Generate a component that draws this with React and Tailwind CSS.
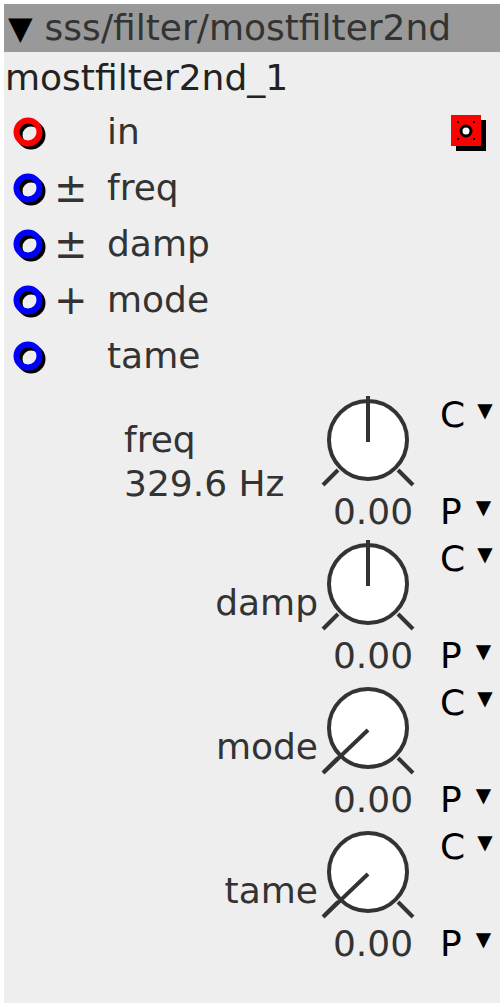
import React from "react";

const ports = [
  { name: "in", color: "#ff0000", sign: "", out: true },
  { name: "freq", color: "#0000ff", sign: "±" },
  { name: "damp", color: "#0000ff", sign: "±" },
  { name: "mode", color: "#0000ff", sign: "+" },
  { name: "tame", color: "#0000ff", sign: "" },
];

const knobs = [
  { name: "freq", display: "329.6 Hz", angle: 0 },
  { name: "damp", angle: 0 },
  { name: "mode", angle: -135 },
  { name: "tame", angle: -135 },
];

function PortIn({ color }) {
  return (
    <svg width="40" height="40" viewBox="0 0 40 40">
      <circle cx="21" cy="23" r="11.5" fill="none" stroke="#000" strokeWidth="6" />
      <circle cx="18" cy="20" r="11.5" fill="none" stroke={color} strokeWidth="6" />
    </svg>
  );
}

function PortOut() {
  return (
    <svg width="40" height="40" viewBox="0 0 40 40">
      <rect x="8" y="8" width="30" height="31" fill="#000" />
      <rect x="3" y="3" width="30" height="31" fill="#ff0000" />
      <circle cx="18" cy="19" r="5" fill="#fff" stroke="#000" strokeWidth="3" />
      <rect x="9" y="9" width="2" height="2" fill="#000" />
      <rect x="25" y="9" width="2" height="2" fill="#000" />
      <rect x="9" y="26" width="2" height="2" fill="#000" />
      <rect x="25" y="26" width="2" height="2" fill="#000" />
    </svg>
  );
}

function Knob({ angle }) {
  const rad = ((angle - 90) * Math.PI) / 180;
  const len = angle === 0 ? 44 : 62;
  const x2 = 48 + Math.cos(rad) * len;
  const y2 = 48 + Math.sin(rad) * len;
  return (
    <svg width="96" height="96" viewBox="0 0 96 96" className="overflow-visible">
      <line x1="18" y1="78" x2="3" y2="93" stroke="#333" strokeWidth="4" />
      <line x1="78" y1="78" x2="93" y2="93" stroke="#333" strokeWidth="4" />
      <circle cx="48" cy="48" r="39" fill="#fff" stroke="#333" strokeWidth="4" />
      <line x1="48" y1="50" x2={x2} y2={y2} stroke="#333" strokeWidth="4" />
    </svg>
  );
}

function KnobRow({ knob }) {
  return (
    <div className="flex h-[144px]">
      <div className="flex-1">
        {knob.display ? (
          <div className="pl-[120px] pt-[28px] leading-[44px]">
            <div>{knob.name}</div>
            <div>{knob.display}</div>
          </div>
        ) : (
          <div className="pt-[49px] pr-[2px] text-right leading-[40px]">{knob.name}</div>
        )}
      </div>
      <div className="w-[96px] flex flex-col items-center">
        <div className="mt-[2px]">
          <Knob angle={knob.angle} />
        </div>
        <div className="mt-[4px] ml-[10px] h-[40px] leading-[40px] whitespace-nowrap">0.00</div>
      </div>
      <div className="w-[84px] pl-6 text-black">
        <div className="mt-[5px] h-10 flex items-center gap-[12px]">
          <span>C</span>
          <span className="text-[20px] mb-[10px]">▼</span>
        </div>
        <div className="mt-[57px] h-10 flex items-center gap-[14px]">
          <span>P</span>
          <span className="text-[20px] mb-[10px]">▼</span>
        </div>
      </div>
    </div>
  );
}

export default function App() {
  return (
    <div className="min-h-screen bg-white p-1 font-['DejaVu_Sans',sans-serif] text-[36px] text-[#333]">
      <div className="bg-[#eeeeee] h-[999px]">
        {/* Header */}
        <div className="h-12 bg-[#999999] flex items-center pl-1 whitespace-nowrap leading-[48px]">
          <span className="text-black text-[32px]">▼</span>
          <span className="ml-[12px]">sss/filter/mostfilter2nd</span>
        </div>
        <div className="h-[52px] flex items-center pl-[1px] text-[#222]">mostfilter2nd_1</div>

        {/* Ports */}
        {ports.map((p) => (
          <div key={p.name} className="h-14 flex items-center">
            <div className="ml-[6px]">
              <PortIn color={p.color} />
            </div>
            <div className="w-[57px] pl-[4px] text-[40px] leading-[56px]">{p.sign}</div>
            <div>{p.name}</div>
            {p.out && (
              <div className="ml-auto mr-[12px]">
                <PortOut />
              </div>
            )}
          </div>
        ))}

        {/* Knobs */}
        <div className="mt-[6px]">
          {knobs.map((k) => (
            <KnobRow key={k.name} knob={k} />
          ))}
        </div>
      </div>
    </div>
  );
}
